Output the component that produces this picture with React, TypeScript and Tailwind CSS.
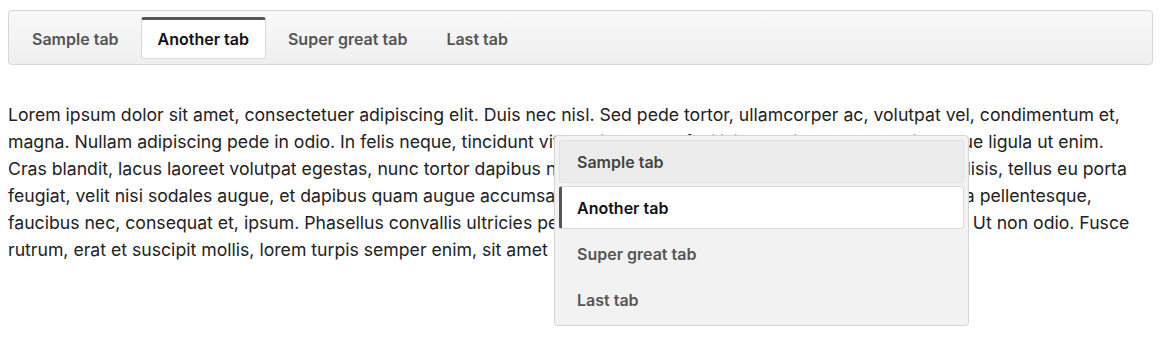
import { useState } from 'react';

const tabs = ['Sample tab', 'Another tab', 'Super great tab', 'Last tab'];

const lines = [
  'Lorem ipsum dolor sit amet, consectetuer adipiscing elit. Duis nec nisl. Sed pede tortor, ullamcorper ac, volutpat vel, condimentum et,',
  'magna. Nullam adipiscing pede in odio. In felis neque, tincidunt vitae, dictum vel, facilisis eu, nibh. Nullam quis neque ligula ut enim.',
  'Cras blandit, lacus laoreet volutpat egestas, nunc tortor dapibus nisl, at varius nunc lorem auctor in nibh. Morbi facilisis, tellus eu porta',
  'feugiat, velit nisi sodales augue, et dapibus quam augue accumsan nisl. Nullam eget augue sit amet lectus et viverra pellentesque,',
  'faucibus nec, consequat et, ipsum. Phasellus convallis ultricies pede. Donec sit amet magna. Aliquam erat volutpat. Ut non odio. Fusce',
  'rutrum, erat et suscipit mollis, lorem turpis semper enim, sit amet',
];

const TabBar = ({ active, onSelect }: { active: number; onSelect: (i: number) => void }) => (
  <div className="flex h-[55px] items-start gap-[5px] rounded-[4px] border border-[#d6d6d6] bg-gradient-to-b from-[#f8f8f8] to-[#efefef] pt-[6px] pl-[6px]">
    {tabs.map((label, i) =>
      i === active ? (
        <button
          key={label}
          onClick={() => onSelect(i)}
          className="h-[42px] rounded-[3px] border border-t-[3px] border-[#d9d9d9] border-t-[#555] bg-white px-[16px] text-[16px] font-semibold text-[#111]"
        >
          {label}
        </button>
      ) : (
        <button
          key={label}
          onClick={() => onSelect(i)}
          className="h-[42px] border border-t-[3px] border-transparent px-[16px] text-[16px] font-semibold text-[#555]"
        >
          {label}
        </button>
      ),
    )}
  </div>
);

const Dropdown = ({ active }: { active: number }) => (
  <div className="absolute left-[554px] top-[135px] flex w-[415px] flex-col gap-[3px] rounded-[4px] border border-[#d4d4d4] bg-[#f2f2f2] p-[4px]">
    {tabs.map((label, i) => {
      if (i === active)
        return (
          <div
            key={label}
            className="flex h-[43px] items-center rounded-[3px] border border-l-[3px] border-[#d9d9d9] border-l-[#555] bg-white pl-[15px] text-[16px] font-semibold text-[#111]"
          >
            {label}
          </div>
        );
      if (i === 0)
        return (
          <div
            key={label}
            className="flex h-[43px] items-center rounded-[3px] border border-[#e0e0e0] bg-[#ececec] pl-[17px] text-[16px] font-semibold text-[#444]"
          >
            {label}
          </div>
        );
      return (
        <div
          key={label}
          className="flex h-[43px] items-center border border-transparent pl-[17px] text-[16px] font-semibold text-[#555]"
        >
          {label}
        </div>
      );
    })}
  </div>
);

export default function App() {
  const [active, setActive] = useState(1);

  return (
    <div className="relative h-[349px] overflow-hidden bg-white px-2 pt-[10px] font-['Inter',sans-serif] text-[#222]">
      <TabBar active={active} onSelect={setActive} />
      <p className="mt-[36px] whitespace-nowrap text-[17.65px] leading-[27px]">
        {lines.map((line, i) => (
          <span key={i}>
            {line}
            {i < lines.length - 1 ? <br /> : null}
          </span>
        ))}
      </p>
      <Dropdown active={active} />
    </div>
  );
}
